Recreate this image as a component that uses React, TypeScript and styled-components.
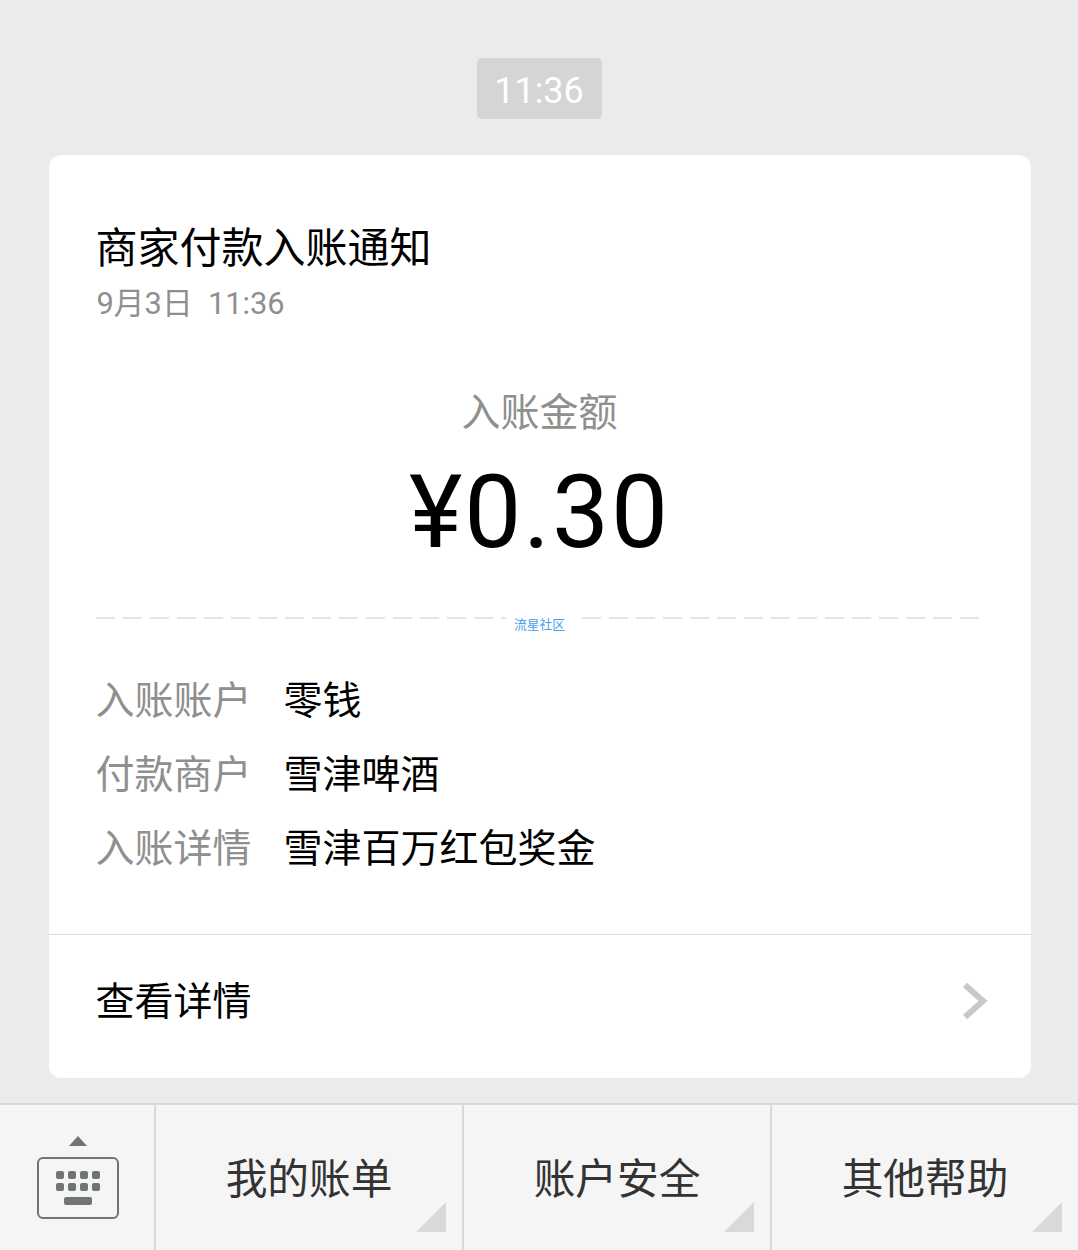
import React from "react";
import styled, { createGlobalStyle } from "styled-components";

const GlobalStyle = createGlobalStyle`
  html, body {
    margin: 0;
    padding: 0;
    background: #ebebeb;
  }
  body {
    font-family: Roboto, "Noto Sans CJK SC", sans-serif;
    -webkit-font-smoothing: antialiased;
  }
`;

const Page = styled.div`
  width: 1078px;
  height: 1250px;
  display: flex;
  flex-direction: column;
  align-items: center;
  overflow: hidden;
  background: #ebebeb;
`;

const TimePill = styled.div`
  margin-top: 58px;
  width: 125px;
  height: 61px;
  padding-top: 4px;
  box-sizing: border-box;
  display: flex;
  align-items: center;
  justify-content: center;
  border-radius: 5px;
  background: #d5d5d5;
  color: #fff;
  font-size: 36px;
`;

const Card = styled.div`
  margin-top: 36px;
  margin-left: 1px;
  width: 982px;
  height: 923px;
  display: flex;
  flex-direction: column;
  background: #fff;
  border-radius: 12px;
`;

const Body = styled.div`
  height: 780px;
  padding: 67px 52px 0 47px;
  box-sizing: border-box;
  border-bottom: 1px solid #dcdcdc;
`;

const Title = styled.div`
  font-size: 42px;
  line-height: 54px;
  color: #000;
`;

const DateLine = styled.div`
  margin-top: 8px;
  margin-left: 1px;
  font-size: 30.8px;
  line-height: 40px;
  color: #8f8f8f;
  white-space: pre;
`;

const AmountBlock = styled.div`
  margin-top: 64px;
  padding-left: 5px;
  display: flex;
  flex-direction: column;
  align-items: center;
`;

const AmountLabel = styled.div`
  font-size: 39px;
  line-height: 50px;
  color: #8f8f8f;
`;

const Amount = styled.div`
  margin-top: 15px;
  font-size: 101.5px;
  line-height: 120px;
  letter-spacing: 2px;
  color: #000;
`;

const Divider = styled.div`
  position: relative;
  margin-top: 44px;
  height: 2px;
  background: repeating-linear-gradient(
    to right,
    #e4e4e4 0,
    #e4e4e4 19px,
    transparent 19px,
    transparent 27px
  );
`;

const Watermark = styled.span`
  position: absolute;
  left: 410px;
  top: 0;
  width: 68px;
  height: 16px;
  background: #fff;
  text-align: center;
  font-size: 12.8px;
  line-height: 16px;
  color: #4a9fe8;
`;

const Rows = styled.div`
  margin-top: 41px;
`;

const Row = styled.div`
  display: flex;
  height: 74px;
  align-items: center;
  font-size: 39px;
`;

const RowLabel = styled.div`
  width: 188px;
  color: #8f8f8f;
`;

const RowValue = styled.div`
  color: #000;
`;

const Footer = styled.div`
  flex: 1;
  display: flex;
  align-items: center;
  justify-content: space-between;
  padding: 0 43px 12px 47px;
  font-size: 39px;
  color: #000;
`;

const FooterLabel = styled.span`
  margin-bottom: 6px;
`;

const BottomBar = styled.div`
  margin-top: 25px;
  width: 100%;
  flex: 1;
  display: flex;
  background: #f5f5f5;
  border-top: 2px solid #d9d9d9;
`;

const KeyboardCell = styled.div`
  width: 154px;
  display: flex;
  flex-direction: column;
  align-items: center;
  padding: 31px 0 0 1px;
  box-sizing: border-box;
`;

const MenuCell = styled.div`
  position: relative;
  width: 308px;
  box-sizing: border-box;
  border-left: 2px solid #d9d9d9;
  display: flex;
  justify-content: center;
  padding-top: 47px;
  font-size: 41.7px;
  line-height: 56px;
  color: #333;
`;

const Corner = styled.span`
  position: absolute;
  right: 16px;
  bottom: 18px;
  width: 30px;
  height: 30px;
  background: #d9d9d9;
  clip-path: polygon(100% 0, 100% 100%, 0 100%);
`;

const KeyboardIcon = () => (
  <svg width="84" height="84" viewBox="0 0 84 84">
    <path d="M33 10 L42 0 L51 10 Z" fill="#6f7476" />
    <rect x="2" y="22" width="80" height="60" rx="5" fill="none" stroke="#6f7476" strokeWidth="2" />
    {[0, 1].map((r) =>
      [0, 1, 2, 3].map((c) => (
        <rect key={`${r}-${c}`} x={20 + c * 12} y={35 + r * 12} width="8" height="8" rx="2" fill="#6f7476" />
      ))
    )}
    <rect x="28" y="61" width="28" height="8" rx="2" fill="#6f7476" />
  </svg>
);

const Chevron = () => (
  <svg width="26" height="38" viewBox="0 0 26 38">
    <path d="M3 3 L21 19 L3 35" fill="none" stroke="#c8c8c8" strokeWidth="6" />
  </svg>
);

const rows = [
  ["入账账户", "零钱"],
  ["付款商户", "雪津啤酒"],
  ["入账详情", "雪津百万红包奖金"],
];

const menus = ["我的账单", "账户安全", "其他帮助"];

export default function App() {
  return (
    <Page>
      <GlobalStyle />
      <TimePill>11:36</TimePill>
      <Card>
        <Body>
          <Title>商家付款入账通知</Title>
          <DateLine>9月3日  11:36</DateLine>
          <AmountBlock>
            <AmountLabel>入账金额</AmountLabel>
            <Amount>¥0.30</Amount>
          </AmountBlock>
          <Divider>
            <Watermark>流星社区</Watermark>
          </Divider>
          <Rows>
            {rows.map(([label, value]) => (
              <Row key={label}>
                <RowLabel>{label}</RowLabel>
                <RowValue>{value}</RowValue>
              </Row>
            ))}
          </Rows>
        </Body>
        <Footer>
          <FooterLabel>查看详情</FooterLabel>
          <Chevron />
        </Footer>
      </Card>
      <BottomBar>
        <KeyboardCell>
          <KeyboardIcon />
        </KeyboardCell>
        {menus.map((m) => (
          <MenuCell key={m}>
            {m}
            <Corner />
          </MenuCell>
        ))}
      </BottomBar>
    </Page>
  );
}
